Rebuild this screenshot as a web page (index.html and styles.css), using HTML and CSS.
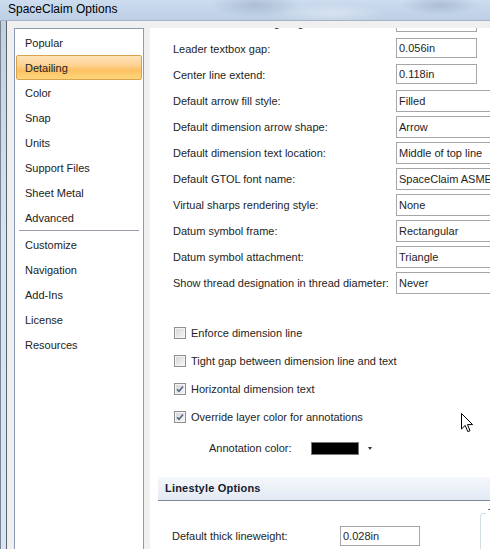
FILE: index.html
```html
<!DOCTYPE html>
<html>
<head>
<meta charset="utf-8">
<link rel="stylesheet" href="styles.css">
</head>
<body>
<div class="window">
  <div class="titlebar"><span class="title">SpaceClaim Options</span></div>
  <div class="frame">
    <div class="edge"></div>
    <div class="client">
      <ul class="nav">
        <li>Popular</li>
        <li class="active">Detailing</li>
        <li>Color</li>
        <li>Snap</li>
        <li>Units</li>
        <li>Support Files</li>
        <li>Sheet Metal</li>
        <li>Advanced</li>
        <li class="sep"></li>
        <li>Customize</li>
        <li>Navigation</li>
        <li>Add-Ins</li>
        <li>License</li>
        <li>Resources</li>
      </ul>
      <div class="panel">
        <div class="scroll">
          <div class="form">
            <div class="lbl">Default leader landing length:</div><div class="txt">0.118in</div>
            <div class="lbl">Leader textbox gap:</div><div class="txt">0.056in</div>
            <div class="lbl">Center line extend:</div><div class="txt">0.118in</div>
            <div class="lbl">Default arrow fill style:</div><div class="sel">Filled</div>
            <div class="lbl">Default dimension arrow shape:</div><div class="sel">Arrow</div>
            <div class="lbl">Default dimension text location:</div><div class="sel">Middle of top line</div>
            <div class="lbl">Default GTOL font name:</div><div class="sel">SpaceClaim ASME GDT</div>
            <div class="lbl">Virtual sharps rendering style:</div><div class="sel">None</div>
            <div class="lbl">Datum symbol frame:</div><div class="sel">Rectangular</div>
            <div class="lbl">Datum symbol attachment:</div><div class="sel">Triangle</div>
            <div class="lbl">Show thread designation in thread diameter:</div><div class="sel">Never</div>
          </div>
          <div class="checks">
            <div class="chk"><span class="box"></span><span>Enforce dimension line</span></div>
            <div class="chk"><span class="box"></span><span>Tight gap between dimension line and text</span></div>
            <div class="chk"><span class="box checked"><svg viewBox="0 0 10 10" width="10" height="10"><path d="M2 5.2 L4 7.3 L8 2.6" fill="none" stroke="#50648c" stroke-width="1.5"/></svg></span><span>Horizontal dimension text</span></div>
            <div class="chk"><span class="box checked"><svg viewBox="0 0 10 10" width="10" height="10"><path d="M2 5.2 L4 7.3 L8 2.6" fill="none" stroke="#50648c" stroke-width="1.5"/></svg></span><span>Override layer color for annotations</span></div>
          </div>
          <div class="annot">
            <span class="annot-lbl">Annotation color:</span>
            <span class="swatch"></span>
            <span class="drop"></span>
          </div>
          <div class="sect">Linestyle Options</div>
          <div class="ls">
            <div class="ls-row">
              <span class="ls-lbl">Default thick lineweight:</span>
              <div class="txt ls-txt">0.028in</div>
            </div>
            <fieldset class="group"><legend>Thin lineweight</legend></fieldset>
          </div>
        </div>
      </div>
    </div>
  </div>
  <svg class="cursor" width="13" height="21" viewBox="0 0 13 21">
    <path d="M0.5 0.5 L0.5 16 L4.2 12.4 L6.8 18.6 L9 17.7 L6.5 11.6 L11.6 11.6 Z" fill="#fff" stroke="#000" stroke-width="1" stroke-linejoin="miter"/>
  </svg>
</div>
</body>
</html>
```
FILE: styles.css
```css
* { box-sizing: border-box; }
html, body { margin: 0; padding: 0; }
body {
  width: 490px;
  height: 549px;
  overflow: hidden;
  font-family: "Liberation Sans", Arial, sans-serif;
  font-size: 11px;
  color: #1e1e1e;
  background: #f0f0f0;
}
.window {
  position: relative;
  width: 490px;
  height: 549px;
  display: flex;
  flex-direction: column;
  overflow: hidden;
}
.titlebar {
  height: 20px;
  flex: none;
  padding-left: 8px;
  background:
    radial-gradient(ellipse 45px 12px at 255px 5px, rgba(120,140,170,0.35), rgba(120,140,170,0)),
    radial-gradient(ellipse 40px 10px at 440px 5px, rgba(120,140,170,0.35), rgba(120,140,170,0)),
    radial-gradient(ellipse 60px 10px at 330px 14px, rgba(255,255,255,0.35), rgba(255,255,255,0)),
    linear-gradient(to bottom, #cddcee, #bccfe5);
}
.title {
  font-size: 12px;
  line-height: 18px;
  color: #000;
}
.frame {
  flex: 1;
  display: flex;
  min-height: 0;
  border-top: 1px solid #a7b3c2;
}
.edge {
  width: 7px;
  flex: none;
  background: linear-gradient(to bottom, #c3cfdd, #d6e4f2 40%, #d8e6f4);
  border-left: 1px solid #7b8592;
  border-right: 1px solid #5b636d;
}
.client {
  flex: 1;
  min-width: 0;
  display: flex;
  gap: 6px;
  padding: 7px 0 0 7px;
  background: #f0f0f0;
}
.nav {
  width: 130px;
  flex: none;
  margin: 0;
  padding: 1px 0 0;
  list-style: none;
  background: #fff;
  border: 1px solid #8b9bb1;
  border-bottom: none;
}
.nav li {
  height: 25px;
  padding-top: 1px;
  line-height: 22px;
  margin: 0 1px;
  padding-left: 8px;
  border: 1px solid transparent;
  border-radius: 2px;
  color: #222;
  white-space: nowrap;
}
.nav li.active {
  border-color: #d9a44c;
  background: linear-gradient(to bottom, #fee4b8 0%, #fdd293 40%, #fdc163 62%, #fed67c 100%);
}
.nav li.sep {
  height: 1px;
  margin: 0 4px 1px;
  padding: 0;
  border: none;
  border-radius: 0;
  background: #9d9db2;
}
.panel {
  flex: 1;
  min-width: 0;
  background: #fff;
  overflow: hidden;
}
.scroll {
  margin-top: -19px;
}
.form {
  display: grid;
  grid-template-columns: 223px auto;
  grid-auto-rows: 26px;
  padding-left: 23px;
}
.lbl {
  margin-top: 3px;
  line-height: 22px;
  white-space: nowrap;
}
.txt {
  margin-top: 3px;
  width: 81px;
  height: 20px;
  padding-left: 2px;
  line-height: 18px;
  border: 1px solid #a6a6a6;
  background: #fff;
  white-space: nowrap;
}
.sel {
  margin-top: 3px;
  width: 140px;
  height: 22px;
  padding-left: 2px;
  line-height: 20px;
  border: 1px solid #a6a6a6;
  background: #fff;
  white-space: nowrap;
}
.checks {
  margin-top: 24px;
  padding-left: 24px;
}
.chk {
  height: 28px;
  display: flex;
  align-items: center;
  gap: 5px;
  white-space: nowrap;
}
.box {
  width: 12px;
  height: 12px;
  flex: none;
  border: 1px solid #8e8f8f;
  background: linear-gradient(135deg, #d4d4d4, #f7f7f7);
  box-shadow: inset 0 0 0 1px #f3f3f3;
  display: flex;
  align-items: center;
  justify-content: center;
}
.annot {
  height: 34px;
  display: flex;
  align-items: center;
  padding-left: 59px;
}
.annot-lbl {
  width: 102px;
  flex: none;
}
.swatch {
  width: 48px;
  height: 13px;
  flex: none;
  background: #000;
  border: 1px solid #7a7a7a;
}
.drop {
  margin-left: 9px;
  width: 0;
  height: 0;
  border-left: 2.5px solid transparent;
  border-right: 2.5px solid transparent;
  border-top: 3px solid #333;
}
.sect {
  margin: 12px 0 0 8px;
  height: 24px;
  padding-left: 7px;
  line-height: 23px;
  font-weight: bold;
  letter-spacing: 0.2px;
  color: #15202e;
  border-bottom: 1px solid #7d8a9a;
  background: linear-gradient(to bottom, #f5f8fc, #e2e9f3);
  white-space: nowrap;
}
.ls {
  display: flex;
  align-items: flex-start;
}
.ls-row {
  display: flex;
  align-items: center;
  padding: 25px 0 0 22px;
  flex: none;
}
.ls-lbl {
  width: 168px;
  flex: none;
}
.ls-txt {
  margin-top: 0;
  width: 80px;
}
.group {
  flex: none;
  width: 120px;
  height: 60px;
  margin: 6px 0 0 60px;
  padding: 0;
  border: 1px solid #d3dde4;
  border-radius: 3px;
}
.group legend {
  margin-left: 5px;
  padding: 0 2px;
  font-size: 11px;
  line-height: 13px;
  white-space: nowrap;
}
.cursor {
  position: absolute;
  left: 461px;
  top: 413px;
}
```
